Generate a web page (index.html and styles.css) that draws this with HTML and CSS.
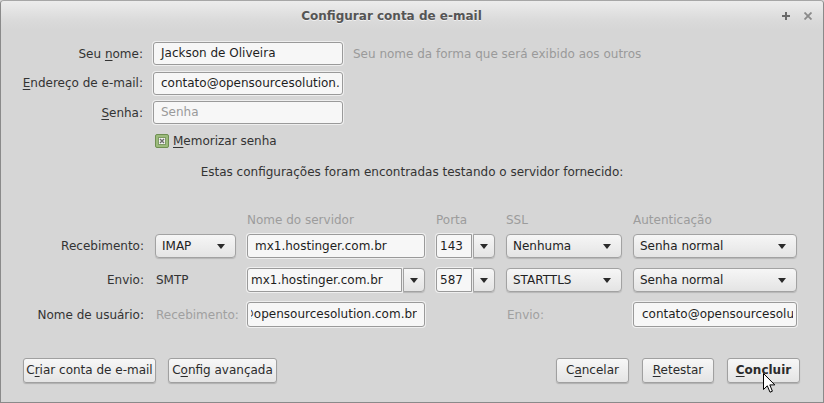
FILE: index.html
```html
<!DOCTYPE html>
<html lang="pt-BR">
<head>
<meta charset="utf-8">
<title>Configurar conta de e-mail</title>
<link rel="stylesheet" href="styles.css">
</head>
<body>
<div class="window">
  <div class="titlebar">
    <div class="title">Configurar conta de e-mail</div>
    <div class="wm-buttons">
      <svg class="wm-icon" width="8" height="8" viewBox="0 0 8 8"><path d="M4 0V8M0 4H8" stroke="#6a6a6a" stroke-width="2"/></svg>
      <svg class="wm-icon" width="8" height="8" viewBox="0 0 8 8"><path d="M0.5 0.5L7.5 7.5M7.5 0.5L0.5 7.5" stroke="#8a8a8a" stroke-width="1.8"/></svg>
    </div>
  </div>

  <div class="content">
    <div class="identity">
      <div class="lbl">Seu <u>n</u>ome:</div>
      <div class="field">Jackson de Oliveira</div>
      <div class="hint">Seu nome da forma que será exibido aos outros</div>

      <div class="lbl"><u>E</u>ndereço de e-mail:</div>
      <div class="field">contato@opensourcesolution.</div>
      <div></div>

      <div class="lbl"><u>S</u>enha:</div>
      <div class="field placeholder">Senha</div>
      <div></div>
    </div>

    <div class="remember">
      <svg class="checkbox" width="14" height="14" viewBox="0 0 14 14">
        <rect x="0.5" y="0.5" width="13" height="13" rx="1.5" fill="#9cbb7c" stroke="#6e8f51"/>
        <rect x="3.5" y="3.5" width="7" height="7" fill="#f4f4f4" stroke="#7e9a66"/>
        <path d="M5 5L9 9M9 5L5 9" stroke="#6b6b6b" stroke-width="1.4"/>
      </svg>
      <span><u>M</u>emorizar senha</span>
    </div>

    <p class="info">Estas configurações foram encontradas testando o servidor fornecido:</p>

    <div class="srow head">
      <div></div>
      <div></div>
      <div class="colhead">Nome do servidor</div>
      <div class="colhead">Porta</div>
      <div class="colhead">SSL</div>
      <div class="colhead">Autenticação</div>
    </div>

    <div class="srow r1">
      <div class="lbl">Recebimento:</div>
      <div class="select">IMAP</div>
      <div class="field wide">mx1.hostinger.com.br</div>
      <div class="combo">
        <div class="field port">143</div>
        <div class="dropbtn"></div>
      </div>
      <div class="select">Nenhuma</div>
      <div class="select">Senha normal</div>
    </div>

    <div class="srow r2">
      <div class="lbl">Envio:</div>
      <div class="plain">SMTP</div>
      <div class="combo">
        <div class="field server">mx1.hostinger.com.br</div>
        <div class="dropbtn"></div>
      </div>
      <div class="combo">
        <div class="field port">587</div>
        <div class="dropbtn"></div>
      </div>
      <div class="select">STARTTLS</div>
      <div class="select">Senha normal</div>
    </div>

    <div class="srow r3">
      <div class="lbl">Nome de usuário:</div>
      <div class="muted">Recebimento:</div>
      <div class="field scrolled"><div class="clip"><span>contato@opensourcesolution.com.br</span></div></div>
      <div></div>
      <div class="muted">Envio:</div>
      <div class="field user-out"><div class="clip-r">contato@opensourcesolution.com.br</div></div>
    </div>

    <div class="actions">
      <div class="group">
        <div class="btn b-criar">C<u>r</u>iar conta de e-mail</div>
        <div class="btn b-config">C<u>o</u>nfig avançada</div>
      </div>
      <div class="group right">
        <div class="btn b-cancel">C<u>a</u>ncelar</div>
        <div class="btn b-retest"><u>R</u>etestar</div>
        <div class="btn b-done"><u>C</u>oncluir</div>
      </div>
    </div>
  </div>

  <svg class="cursor" width="13" height="21" viewBox="0 0 13 21">
    <path d="M0.5 0.5V16.5L4.3 12.8L7 19.2L9.4 18.2L6.8 11.9H11.8Z" fill="#ffffff" stroke="#000000" stroke-width="1" stroke-linejoin="round"/>
  </svg>
</div>
</body>
</html>
```

FILE: styles.css
```css
html, body {
  margin: 0;
  padding: 0;
  background: #d6d6d6;
  overflow: hidden;
}

.window {
  width: 824px;
  height: 403px;
  box-sizing: border-box;
  border: 1px solid #8a8a8a;
  border-top-color: #a6a6a6;
  border-radius: 4px 4px 0 0;
  background: #d6d6d6;
  position: relative;
  overflow: hidden;
  font-family: "DejaVu Sans", "Noto Sans", sans-serif;
  font-size: 12px;
  color: #333333;
}

u {
  text-decoration: underline;
  text-underline-offset: 2px;
}

/* ---------- title bar ---------- */
.titlebar {
  height: 28px;
  display: flex;
  align-items: center;
  background: linear-gradient(#ececec, #dadada 70%, #d6d6d6);
}

.title {
  flex: 1;
  text-align: center;
  font-weight: bold;
  font-size: 12px;
  color: #555555;
  text-shadow: 0 1px 0 rgba(255, 255, 255, 0.6);
  padding-top: 1px;
}

.wm-buttons {
  display: flex;
  align-items: center;
  gap: 14px;
  padding-right: 11px;
  padding-top: 1px;
}

/* ---------- identity section ---------- */
.identity {
  margin-top: 13px;
  display: grid;
  grid-template-columns: 142px 190px auto;
  grid-auto-rows: 23px;
  column-gap: 10px;
  row-gap: 6.5px;
  align-items: center;
}

.lbl {
  text-align: right;
  color: #333333;
  white-space: nowrap;
}

.field {
  box-sizing: border-box;
  height: 23px;
  border: 1px solid #9a9a9a;
  border-radius: 3px;
  background: #f7f7f7;
  box-shadow: 0 0 0 1px #efefef;
  padding: 0 7px;
  line-height: 21px;
  color: #1e1e1e;
  white-space: nowrap;
  overflow: hidden;
}

.field.placeholder {
  color: #9a9a9a;
}

.hint {
  color: #9a9a9a;
  white-space: nowrap;
}

/* ---------- remember ---------- */
.remember {
  margin-top: 10px;
  padding-left: 154px;
  display: flex;
  align-items: center;
  gap: 4px;
  height: 14px;
  color: #333333;
}

.checkbox {
  display: block;
  flex: none;
}

.info {
  margin: 16px 0 0;
  line-height: 16px;
  text-align: center;
  color: #333333;
}

/* ---------- servers ---------- */
.srow {
  display: grid;
  grid-template-columns: 143px 81px 178px 59px 116px 164px;
  column-gap: 11px;
  align-items: center;
}

.srow.head {
  margin-top: 32px;
  height: 16px;
}

.srow.r1 { margin-top: 6px; height: 24px; }
.srow.r2 { margin-top: 10px; height: 24px; }
.srow.r3 { margin-top: 10px; height: 25px; }

.colhead {
  color: #9c9c9c;
  white-space: nowrap;
}

.select {
  box-sizing: border-box;
  height: 24px;
  border: 1px solid #a2a2a2;
  border-radius: 4px;
  background: linear-gradient(#f6f6f6, #e4e4e4);
  box-shadow: 0 1px 1px rgba(0, 0, 0, 0.15);
  padding: 0 6px;
  line-height: 22px;
  color: #222222;
  position: relative;
  white-space: nowrap;
}

.select::after {
  content: "";
  position: absolute;
  right: 10px;
  top: 9px;
  border-left: 4px solid transparent;
  border-right: 4px solid transparent;
  border-top: 5px solid #2a2a2a;
}

.plain {
  padding-left: 1px;
  color: #333333;
}

.muted {
  color: #a0a0a0;
  padding-left: 1px;
  white-space: nowrap;
}

.field.wide {
  height: 24px;
  line-height: 22px;
}

.combo {
  display: flex;
  gap: 1px;
  height: 24px;
}

.combo .field {
  height: 24px;
  line-height: 22px;
  border-radius: 3px 0 0 3px;
}

.field.server {
  width: 155px;
  flex: none;
  padding: 0 3px;
}

.field.port {
  width: 36px;
  flex: none;
  padding: 0 3px;
}

.dropbtn {
  flex: 1;
  box-sizing: border-box;
  height: 24px;
  border: 1px solid #a2a2a2;
  border-radius: 0 4px 4px 0;
  background: linear-gradient(#f6f6f6, #e4e4e4);
  box-shadow: 0 1px 1px rgba(0, 0, 0, 0.15);
  position: relative;
}

.dropbtn::after {
  content: "";
  position: absolute;
  left: 50%;
  margin-left: -4px;
  top: 9px;
  border-left: 4px solid transparent;
  border-right: 4px solid transparent;
  border-top: 5px solid #2a2a2a;
}

.field.scrolled {
  height: 25px;
  line-height: 23px;
  padding: 0 7px 0 3px;
}

.clip {
  display: flex;
  justify-content: flex-end;
  overflow: hidden;
}

.clip span {
  flex: none;
}

.field.user-out {
  height: 25px;
  line-height: 23px;
  padding: 0 3px 0 8px;
}

.clip-r {
  overflow: hidden;
  white-space: nowrap;
}

/* ---------- actions ---------- */
.actions {
  margin-top: 31px;
  display: flex;
  justify-content: space-between;
  padding: 0 23px 0 22px;
}

.group {
  display: flex;
  gap: 12px;
}

.group.right {
  gap: 13px;
}

.btn {
  box-sizing: border-box;
  height: 25px;
  border: 1px solid #a0a0a0;
  border-radius: 3px;
  background: linear-gradient(#f7f7f7, #e4e4e4);
  box-shadow: 0 1px 1px rgba(0, 0, 0, 0.18);
  line-height: 23px;
  text-align: center;
  color: #2b2b2b;
  white-space: nowrap;
}

.b-criar { width: 133px; }
.b-config { width: 109px; }
.b-cancel { width: 73px; }
.b-retest { width: 72px; }
.b-done { width: 73px; font-weight: bold; }

/* ---------- pointer overlay ---------- */
.cursor {
  position: absolute;
  left: 762px;
  top: 372px;
}
```
